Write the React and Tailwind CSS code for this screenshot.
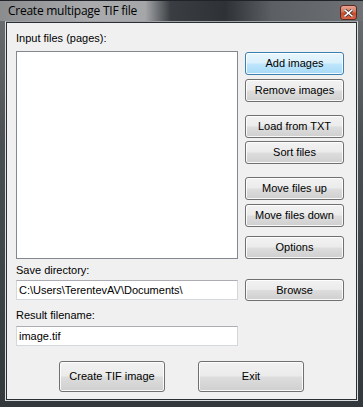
import React from 'react';

// Win7 style dialog: "Create multipage TIF file"
const font = { fontFamily: '"Liberation Sans", Arial, sans-serif' };

const btnBase =
  'w-[99px] rounded-[3px] border text-[11px] text-black leading-none flex items-center justify-center shadow-[inset_0_0_0_1px_rgba(255,255,255,0.85)]';
const btnGray =
  'border-[#707070] bg-[linear-gradient(to_bottom,#f2f2f2_0%,#ebebeb_48%,#dddddd_52%,#cfcfcf_100%)]';
const btnBlue =
  'border-[#3c7fb1] bg-[linear-gradient(to_bottom,#eaf6fd_0%,#d9f0fc_48%,#bee6fd_52%,#a7d9f5_100%)]';

function Btn({ children, blue, className = '' }) {
  return (
    <button className={`${btnBase} ${blue ? btnBlue : btnGray} ${className}`} style={font}>
      {children}
    </button>
  );
}

function TextBox({ value }) {
  return (
    <div className="w-[222px] h-[20px] bg-white border border-[#d4d7db] border-t-[#abadb3] px-[2px] flex items-center text-[11px] text-black" style={font}>
      {value}
    </div>
  );
}

export default function App() {
  return (
    <div className="w-[363px] h-[407px] bg-[linear-gradient(to_bottom,#6c7073_0%,#4a4f53_35%,#33383c_100%)] pt-[21px] px-[5px] pb-[6px]">
      {/* title bar */}
      <div className="absolute left-0 top-0 w-[363px] h-[21px] bg-[linear-gradient(to_right,#8a8c8e_0%,#a9abad_25%,#a4a6a8_40%,#3a3e42_47%,#2e3236_62%,#5c6064_75%,#6e7275_100%)] border-t border-[#202428]">
        <div className="absolute left-[8px] top-[3px] text-[12px] text-black leading-[14px]" style={{ fontFamily: '"Open Sans", "Liberation Sans", sans-serif', letterSpacing: '-0.25px' }}>
          Create multipage TIF file
        </div>
        <div className="absolute left-[340px] top-[4px] w-[17px] h-[15px] rounded-[3px] border border-[#5a2a22] bg-[linear-gradient(to_bottom,#e8a493_0%,#d7735b_45%,#c74a2b_55%,#d9664a_100%)] flex items-center justify-center">
          <svg width="9" height="8" viewBox="0 0 9 8">
            <path d="M1 1 L8 7 M8 1 L1 7" stroke="#3a2a28" strokeWidth="3" strokeLinecap="square" />
            <path d="M1 1 L8 7 M8 1 L1 7" stroke="#ffffff" strokeWidth="1.6" strokeLinecap="square" />
          </svg>
        </div>
      </div>

      <div className="w-full h-full border border-[#d9dde0] border-t-[#9ea2a5]">
        <div className="w-full h-full border border-[#2a2f33] bg-[#f0f0f0] pl-[9px] pt-[9px]" style={font}>
          {/* list + side buttons */}
          <div className="flex gap-[7px]">
            <div className="flex flex-col">
              <div className="text-[11px] leading-[13px] h-[13px] text-black">Input files (pages):</div>
              <div className="mt-[6px] w-[222px] h-[208px] bg-white border border-[#828790]"></div>
            </div>
            <div className="flex flex-col pt-[20px]">
              <Btn blue className="h-[23px]">Add images</Btn>
              <Btn className="h-[23px] mt-[4px]">Remove images</Btn>
              <Btn className="h-[23px] mt-[13px]">Load from TXT</Btn>
              <Btn className="h-[23px] mt-[3px]">Sort files</Btn>
              <Btn className="h-[23px] mt-[13px]">Move files up</Btn>
              <Btn className="h-[23px] mt-[4px]">Move files down</Btn>
              <Btn className="h-[23px] mt-[9px]">Options</Btn>
            </div>
          </div>

          <div className="mt-[5px] text-[11px] leading-[13px] h-[13px] text-black">Save directory:</div>
          <div className="mt-[2px] flex items-center gap-[7px]">
            <TextBox value="C:\Users\TerentevAV\Documents\" />
            <Btn className="h-[22px]">Browse</Btn>
          </div>

          <div className="mt-[8px] text-[11px] leading-[13px] h-[13px] text-black">Result filename:</div>
          <div className="mt-[4px]">
            <TextBox value="image.tif" />
          </div>

          <div className="mt-[15px] flex pl-[43px] gap-[33px]">
            <Btn className="h-[31px] w-[106px]">Create TIF image</Btn>
            <Btn className="h-[31px] w-[106px]">Exit</Btn>
          </div>
        </div>
      </div>
    </div>
  );
}
